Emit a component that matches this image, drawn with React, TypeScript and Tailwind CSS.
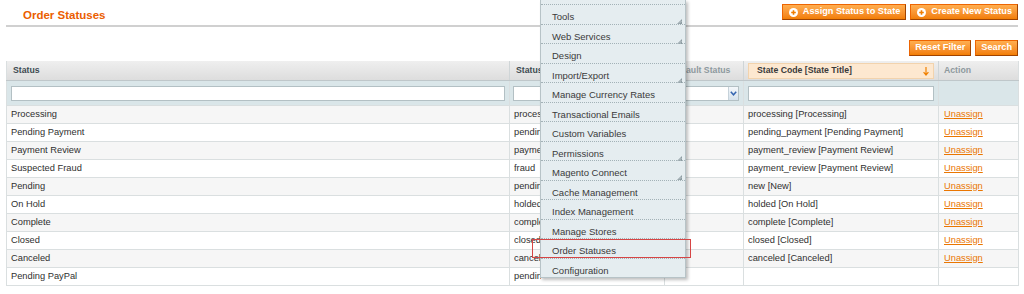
import React from 'react';

const rows = [
  { label: 'Processing', code: 'processing', state: 'processing [Processing]' },
  { label: 'Pending Payment', code: 'pending_payment', state: 'pending_payment [Pending Payment]' },
  { label: 'Payment Review', code: 'payment_review', state: 'payment_review [Payment Review]' },
  { label: 'Suspected Fraud', code: 'fraud', state: 'payment_review [Payment Review]' },
  { label: 'Pending', code: 'pending', state: 'new [New]' },
  { label: 'On Hold', code: 'holded', state: 'holded [On Hold]' },
  { label: 'Complete', code: 'complete', state: 'complete [Complete]' },
  { label: 'Closed', code: 'closed', state: 'closed [Closed]' },
  { label: 'Canceled', code: 'canceled', state: 'canceled [Canceled]' },
  { label: 'Pending PayPal', code: 'pending_paypal', state: '' },
];

const menuItems = [
  { label: 'Tools', sub: true },
  { label: 'Web Services', sub: true },
  { label: 'Design', sub: false },
  { label: 'Import/Export', sub: true },
  { label: 'Manage Currency Rates', sub: false },
  { label: 'Transactional Emails', sub: false },
  { label: 'Custom Variables', sub: false },
  { label: 'Permissions', sub: true },
  { label: 'Magento Connect', sub: true },
  { label: 'Cache Management', sub: false },
  { label: 'Index Management', sub: false },
  { label: 'Manage Stores', sub: false },
  { label: 'Order Statuses', sub: false },
  { label: 'Configuration', sub: false },
];

function PlusCircle() {
  return (
    <svg width="9" height="9" viewBox="0 0 9 9">
      <circle cx="4.5" cy="4.5" r="4.5" fill="#fff" />
      <path d="M4.5 2.2v4.6M2.2 4.5h4.6" stroke="#f07d00" strokeWidth="1.6" />
    </svg>
  );
}

function OrangeButton({ children, icon }: { children: React.ReactNode; icon?: boolean }) {
  return (
    <button
      className={`h-[16px] flex items-center gap-[5px] border border-t-[#ed6502] border-l-[#ed6502] border-r-[#a04300] border-b-[#a04300] bg-gradient-to-b from-[#ffae4f] to-[#f27e00] text-white font-bold text-[9.2px] leading-none ${
        icon ? 'pl-[6px] pr-[5px]' : 'px-[5px]'
      }`}
    >
      {icon && <PlusCircle />}
      {children}
    </button>
  );
}

function SubArrow() {
  return (
    <svg width="5" height="5" viewBox="0 0 5 5" className="absolute right-[3px] top-[14px]">
      <polygon points="5,0 5,5 0,5" fill="#8d9ca2" />
      <path d="M2 4.5L4.5 2" stroke="#e5edf0" strokeWidth="0.6" />
    </svg>
  );
}

export default function App() {
  const cell = 'border-b border-r border-[#dadfe0] px-[4px] whitespace-nowrap overflow-hidden';

  return (
    <div className="relative w-[1024px] h-[294px] overflow-hidden bg-white font-['Liberation_Sans',Arial,sans-serif] text-[#2f2f2f]">
      <div className="px-[6px]">
        {/* header */}
        <div className="h-[27px] flex items-start justify-between border-b-2 border-[#d0d0d0]">
          <h3 className="mt-[8px] ml-[17px] text-[11.5px] leading-[14px] font-bold text-[#eb5e00]">Order Statuses</h3>
          <div className="mt-[4px] flex gap-[4px]">
            <OrangeButton icon>Assign Status to State</OrangeButton>
            <OrangeButton icon>Create New Status</OrangeButton>
          </div>
        </div>

        <div className="mt-[13px] h-[17px] flex justify-end gap-[4px]">
          <OrangeButton>Reset Filter</OrangeButton>
          <OrangeButton>Search</OrangeButton>
        </div>

        {/* grid */}
        <table className="mt-[4px] w-full table-fixed border-collapse border-l border-[#dadfe0]">
          <colgroup>
            <col className="w-[503px]" />
            <col className="w-[155px]" />
            <col className="w-[79px]" />
            <col className="w-[195px]" />
            <col className="w-[80px]" />
          </colgroup>
          <thead>
            <tr className="h-[19px] bg-gradient-to-b from-[#efefef] to-[#dcdcdc] text-[8.7px] font-bold text-left">
              <th className="pl-[6px] border-r border-b border-r-[#cfd5d7] border-b-[#bfc7ca] text-[#3e4b51]">Status</th>
              <th className="pl-[6px] border-r border-b border-r-[#cfd5d7] border-b-[#bfc7ca] text-[#3e4b51]">
                <span className="block w-[24px] overflow-hidden whitespace-nowrap">Status Code</span>
              </th>
              <th className="pl-[7px] border-r border-b border-r-[#cfd5d7] border-b-[#bfc7ca] text-[#8e999e] whitespace-nowrap">
                <span className="block overflow-hidden" dir="rtl">Default Status</span>
              </th>
              <th className="pt-[2px] pb-[1px] px-[4px] border-r border-b border-r-[#cfd5d7] border-b-[#bfc7ca]">
                <div className="relative h-[16px] flex items-center pl-[8px] bg-[#fde8d0] border border-[#f2d3ad] text-[#3a3a3a]">
                  State Code [State Title]
                  <svg width="6" height="9" viewBox="0 0 6 9" className="absolute right-[4px] top-[3px]">
                    <path d="M3 0v7.5M0.6 5.2L3 8l2.4-2.8" stroke="#f08000" strokeWidth="1.2" fill="none" />
                  </svg>
                </div>
              </th>
              <th className="pl-[5px] border-r border-b border-r-[#dadfe0] border-b-[#bfc7ca] text-[#8e999e]">Action</th>
            </tr>
          </thead>
          <tbody>
            <tr className="h-[25px] bg-[#dae6e9]">
              <td className="px-[4px] border-r border-b border-[#dadfe0]">
                <div className="h-[15px] bg-white border border-[#b3c0c4]" />
              </td>
              <td className="pl-[3px] pr-[4px] border-r border-b border-[#dadfe0]">
                <div className="h-[15px] bg-white border border-[#b3c0c4]" />
              </td>
              <td className="px-[4px] border-r border-b border-[#dadfe0]">
                <div className="h-[15px] flex bg-white border border-[#b3c0c4]">
                  <div className="flex-1" />
                  <div className="w-[10px] flex items-center justify-center bg-gradient-to-b from-[#f4f8fb] to-[#d6e2ec] border-l border-[#c6d2da]">
                    <svg width="7" height="5" viewBox="0 0 7 5">
                      <path d="M0.8 0.8L3.5 3.8L6.2 0.8" stroke="#3465b0" strokeWidth="1.5" fill="none" />
                    </svg>
                  </div>
                </div>
              </td>
              <td className="px-[4px] border-r border-b border-[#dadfe0]">
                <div className="h-[15px] bg-white border border-[#b3c0c4]" />
              </td>
              <td className="border-r border-b border-[#dadfe0]" />
            </tr>
            {rows.map((r, i) => (
              <tr key={r.label} className={`h-[18px] text-[9.3px] leading-none ${i % 2 === 0 ? 'bg-[#f6f6f6]' : 'bg-white'}`}>
                <td className={cell}>{r.label}</td>
                <td className={cell}>
                  {/* the rest of the code lies under the open menu */}
                  <span className="block w-[27px] overflow-hidden">{r.code}</span>
                </td>
                <td className={cell}></td>
                <td className={cell}>{r.state}</td>
                <td className={`${cell} pl-[5px]`}>
                  {r.state && <span className="text-[#ea7601] underline">Unassign</span>}
                </td>
              </tr>
            ))}
          </tbody>
        </table>
      </div>

      {/* System dropdown menu */}
      <div className="absolute left-[540px] top-0 w-[146px] pt-[4px] bg-[#e5edf0] border-x border-b border-[#b7c3c7] shadow-[2px_2px_3px_rgba(0,0,0,0.25)]">
        {menuItems.map((m) => (
          <div
            key={m.label}
            className="relative h-[19.5px] pl-[11px] pt-[5px] text-[9.5px] leading-[13px] text-[#3a3a3a] border-t border-dotted border-[#a3b2b7] whitespace-nowrap"
          >
            {m.label}
            {m.sub && <SubArrow />}
          </div>
        ))}
      </div>

      {/* highlight */}
      <div className="absolute left-[532px] top-[239px] w-[159px] h-[19px] border border-[#d64545]" />
    </div>
  );
}
